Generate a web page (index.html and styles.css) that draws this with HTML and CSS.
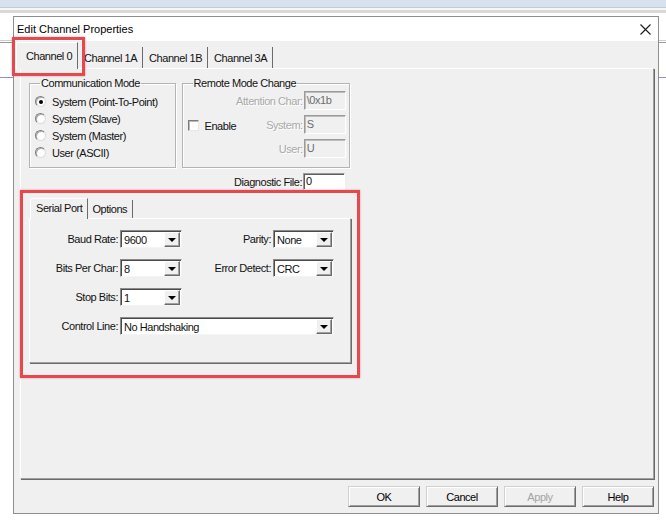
FILE: index.html
```html
<!DOCTYPE html>
<html lang="en">
<head>
    <meta charset="UTF-8">
    <meta name="viewport" content="width=device-width, initial-scale=1.0">
    <title>Edit Channel Properties</title>
    <link rel="stylesheet" href="styles.css">
</head>
<body>
<div class="desktop">
    <div class="dialog">
        <div class="titlebar">
            <span class="title">Edit Channel Properties</span>
            <svg class="close" width="11" height="11" viewBox="0 0 11 11">
                <path d="M0.5 0.5L10.5 10.5M10.5 0.5L0.5 10.5" stroke="#1a1a1a" stroke-width="1.1" fill="none"/>
            </svg>
        </div>

        <div class="dialog-body">
            <div class="tabs">
                <div class="tab active">Channel 0</div>
                <div class="tab">Channel 1A</div>
                <div class="tab">Channel 1B</div>
                <div class="tab">Channel 3A</div>
            </div>

            <div class="page">
                <div class="left-col">
                    <div class="group-row">
                        <fieldset class="group comm">
                            <legend>Communication Mode</legend>
                            <div class="radio-row"><span class="radio on"></span>System (Point-To-Point)</div>
                            <div class="radio-row"><span class="radio"></span>System (Slave)</div>
                            <div class="radio-row"><span class="radio"></span>System (Master)</div>
                            <div class="radio-row"><span class="radio"></span>User (ASCII)</div>
                        </fieldset>

                        <fieldset class="group remote">
                            <legend>Remote Mode Change</legend>
                            <div class="remote-body">
                                <div class="check-row"><span class="checkbox"></span>Enable</div>
                                <div class="remote-fields">
                                    <div class="field"><span class="lbl off">Attention Char:</span><span class="edit off">\0x1b</span></div>
                                    <div class="field"><span class="lbl off">System:</span><span class="edit off">S</span></div>
                                    <div class="field"><span class="lbl off">User:</span><span class="edit off">U</span></div>
                                </div>
                            </div>
                        </fieldset>
                    </div>

                    <div class="field diag">
                        <span class="lbl">Diagnostic File:</span><span class="edit diag-edit">0</span>
                    </div>
                </div>

                <div class="subtabs">
                    <div class="tab small active">Serial Port</div>
                    <div class="tab small">Options</div>
                </div>
                <div class="subpage">
                    <div class="serial-grid">
                        <span class="lbl">Baud Rate:</span>
                        <div class="combo"><span>9600</span><i class="drop"></i></div>
                        <span class="lbl">Parity:</span>
                        <div class="combo"><span>None</span><i class="drop"></i></div>

                        <span class="lbl">Bits Per Char:</span>
                        <div class="combo"><span>8</span><i class="drop"></i></div>
                        <span class="lbl">Error Detect:</span>
                        <div class="combo"><span>CRC</span><i class="drop"></i></div>

                        <span class="lbl">Stop Bits:</span>
                        <div class="combo"><span>1</span><i class="drop"></i></div>
                        <span></span>
                        <span></span>

                        <span class="lbl">Control Line:</span>
                        <div class="combo wide"><span>No Handshaking</span><i class="drop"></i></div>
                    </div>
                </div>
            </div>

            <div class="buttons">
                <button class="btn">OK</button>
                <button class="btn">Cancel</button>
                <button class="btn" disabled>Apply</button>
                <button class="btn">Help</button>
            </div>
        </div>
    </div>

    <!-- red call-out frames drawn over the dialog -->
    <div class="callout callout-tab"></div>
    <div class="callout callout-serial"></div>
</div>
</body>
</html>
```

FILE: styles.css
```css
body {
    margin: 0;
    font-family: "Liberation Sans", Arial, sans-serif;
    font-size: 11px;
    color: #111;
}

.desktop {
    position: relative;
    width: 666px;
    height: 521px;
    overflow: hidden;
    padding-top: 16px;
    box-sizing: border-box;
    background: linear-gradient(#d7e2ef 0 7px, #c3ccd6 7px 8px, #f7f7f7 8px 10px, #d9d9d9 10px 13px, #fff 13px 40px,
        #cfcfcf 40px 41px, #fff 41px 42px, #9a9a9a 42px 43px, #fff 43px 77px, #8c8ccf 77px 78px, #fff 78px);
}

/* dialog frame */
.dialog {
    margin-left: 13px;
    width: 646px;
    height: 498px;
    box-sizing: border-box;
    border: 1px solid #8f8f8f;
    background-color: #f0f0f0;
    display: flex;
    flex-direction: column;
}
.titlebar {
    height: 24px;
    background-color: #fff;
    display: flex;
    align-items: center;
    justify-content: space-between;
    padding: 0 7px 0 3px;
}
.title {
    font-size: 11px;
    color: #000;
}
.close {
    display: block;
}

.dialog-body {
    padding: 1px 4px 0 2px;
    flex: 1;
}

/* tab strips */
.tabs, .subtabs {
    display: flex;
    align-items: flex-end;
    letter-spacing: -0.45px;
}
.tabs {
    height: 26px;
}
.tab {
    height: 21px;
    line-height: 22px;
    padding: 0 5px 0 6px;
    border-right: 1px solid #6b6b6b;
    box-sizing: border-box;
}
.tab.active {
    height: 27px;
    line-height: 27px;
    padding: 0 5px 0 9px;
    margin-bottom: -1px;
    background-color: #f0f0f0;
    border-top: 1px solid #fff;
    border-left: 1px solid #fff;
    position: relative;
}

.page {
    margin-left: 4px;
    width: 634px;
    height: 411px;
    box-sizing: border-box;
    border-top: 1px solid #fff;
    border-left: 1px solid #fff;
    border-right: 1px solid #a0a0a0;
    border-bottom: 1px solid #a0a0a0;
    box-shadow: 1px 1px 0 #6b6b6b;
    padding: 8px 0 0 8px;
    letter-spacing: -0.45px;
}

.left-col {
    width: 321px;
}
.group-row {
    display: flex;
    gap: 6px;
}

/* group boxes */
.group {
    margin: 0;
    border: 1px solid #b4b4b4;
    box-shadow: inset 1px 1px 0 #fff, 1px 1px 0 #fff;
    min-width: 0;
    box-sizing: border-box;
}
.group legend {
    padding: 0 1px;
    margin-left: 5px;
    line-height: 13px;
}
.comm {
    width: 147px;
    height: 91px;
    padding: 3px 0 0 5px;
}
.remote {
    width: 169px;
    height: 91px;
    padding: 1px 4px 0 5px;
}

.radio-row {
    height: 17px;
    display: flex;
    align-items: center;
    gap: 6px;
}
.radio {
    width: 11px;
    height: 11px;
    box-sizing: border-box;
    border-radius: 50%;
    background-color: #fff;
    border: 1px solid;
    border-color: #7c7c7c #dcdcdc #dcdcdc #7c7c7c;
    box-shadow: inset 1px 1px 0 #b0b0b0;
    display: flex;
    align-items: center;
    justify-content: center;
}
.radio.on::after {
    content: "";
    width: 4px;
    height: 4px;
    border-radius: 50%;
    background-color: #000;
}

.remote-body {
    display: flex;
    align-items: center;
    justify-content: space-between;
}
.check-row {
    display: flex;
    align-items: center;
    gap: 6px;
    margin-top: 2px;
}
.checkbox {
    width: 11px;
    height: 11px;
    box-sizing: border-box;
    background-color: #fff;
    border: 1px solid;
    border-color: #7c7c7c #e6e6e6 #e6e6e6 #7c7c7c;
    box-shadow: inset 1px 1px 0 #b8b8b8;
}
.remote-fields {
    display: flex;
    flex-direction: column;
    gap: 5px;
}

.field {
    display: flex;
    justify-content: flex-end;
    align-items: center;
}
.lbl {
    text-align: right;
    white-space: nowrap;
}
.lbl.off {
    color: #a9a9a9;
    text-shadow: 1px 1px 0 #fff;
}
.edit {
    width: 42px;
    height: 19px;
    box-sizing: border-box;
    margin-left: 1px;
    padding-left: 2px;
    line-height: 17px;
    background-color: #fff;
    border: 1px solid;
    border-color: #9a9a9a #fff #fff #9a9a9a;
    box-shadow: inset 1px 1px 0 #5e5e5e;
}
.edit.off {
    background-color: #f0f0f0;
    color: #6d6d6d;
    box-shadow: inset 1px 1px 0 #bdbdbd;
}
.diag {
    margin-top: 5px;
    padding-right: 5px;
}
.diag-edit {
    height: 17px;
    line-height: 15px;
}

/* serial port tab control */
.subtabs {
    margin: 8px 0 0 0;
    height: 20px;
}
.tab.small {
    height: 18px;
    line-height: 19px;
    padding: 0 5px 0 4px;
}
.tab.small.active {
    height: 21px;
    line-height: 19px;
    padding: 0 5px 0 5px;
    margin-left: 1px;
}
.subpage {
    width: 322px;
    height: 145px;
    box-sizing: border-box;
    border-top: 1px solid #fff;
    border-left: 1px solid #fff;
    border-right: 1px solid #a0a0a0;
    border-bottom: 1px solid #a0a0a0;
    box-shadow: 1px 1px 0 #6b6b6b;
    padding-top: 11px;
}
.serial-grid {
    display: grid;
    grid-template-columns: 88px 62px 87px 61px;
    grid-auto-rows: 18px;
    column-gap: 2px;
    row-gap: 11px;
    align-items: center;
}
.combo {
    height: 18px;
    box-sizing: border-box;
    background-color: #fff;
    border: 1px solid;
    border-color: #8a8a8a #f4f4f4 #f4f4f4 #8a8a8a;
    box-shadow: inset 1px 1px 0 #4a4a4a;
    display: flex;
    align-items: center;
    justify-content: space-between;
    padding: 1px 1px 0 3px;
}
.combo.wide {
    grid-column: 2 / 5;
}
.drop {
    width: 16px;
    height: 15px;
    box-sizing: border-box;
    background-color: #f0f0f0;
    border: 1px solid;
    border-color: #fff #6b6b6b #6b6b6b #fff;
    box-shadow: inset -1px -1px 0 #a0a0a0;
    display: flex;
    align-items: center;
    justify-content: center;
}
.drop::after {
    content: "";
    margin-top: 1px;
    border-left: 4px solid transparent;
    border-right: 4px solid transparent;
    border-top: 4px solid #000;
}

/* command buttons */
.buttons {
    display: flex;
    justify-content: flex-end;
    gap: 6px;
    margin-top: 7px;
    padding-right: 0;
}
.btn {
    width: 72px;
    height: 21px;
    font-family: "Liberation Sans", Arial, sans-serif;
    font-size: 11px;
    letter-spacing: -0.45px;
    color: #000;
    background-color: #f0f0f0;
    border: 1px solid;
    border-color: #d0d0d0 #6b6b6b #6b6b6b #d0d0d0;
    box-shadow: inset 1px 1px 0 #fff, inset -1px -1px 0 #a0a0a0;
    padding: 0;
}
.btn[disabled] {
    color: #a3a3a3;
}

/* red highlight frames */
.callout {
    position: absolute;
    border: 3px solid #e8474d;
    box-shadow: 0 0 2px rgba(120, 0, 0, 0.35);
}
.callout-tab {
    left: 12px;
    top: 37px;
    width: 67px;
    height: 33px;
}
.callout-serial {
    left: 20px;
    top: 190px;
    width: 334px;
    height: 182px;
}
```
